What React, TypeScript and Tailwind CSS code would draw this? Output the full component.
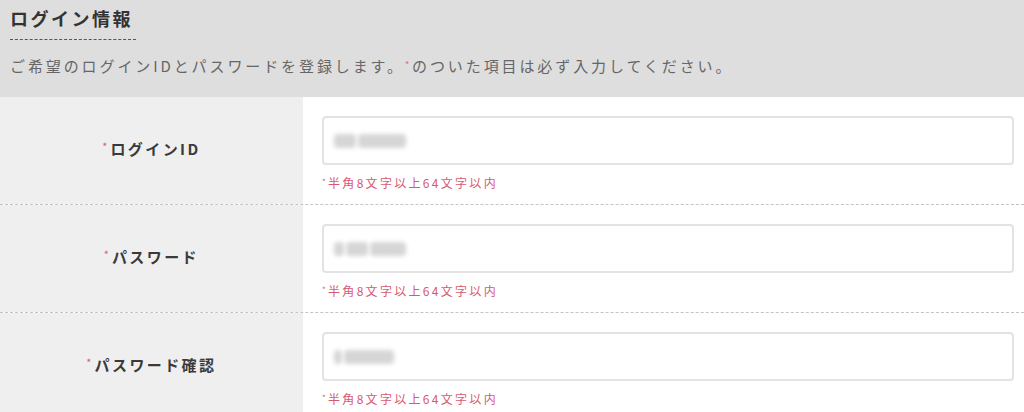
const FONT = '"Noto Sans CJK JP", "Noto Sans", sans-serif';

type Field = {
	label: string;
	blur: number[];
};

// Blurred widths of the masked values in each input, to mimic the screenshot.
const FIELDS: Field[] = [
	{label: 'ログインID', blur: [22, 48]},
	{label: 'パスワード', blur: [10, 22, 36]},
	{label: 'パスワード確認', blur: [8, 50]},
];

function Required() {
	return <span className="relative -top-[5px] mr-[1px] text-[9px] text-[#e0687c]">*</span>;
}

function Row({field}: {field: Field}) {
	return (
		<div className="flex h-[108px] border-b border-dashed border-[#c4c4c4]">
			<div className="flex w-[303px] shrink-0 items-center justify-center bg-[#efefef] pb-[3px]">
				<p className="text-[15px] font-bold tracking-[2.4px] text-[#3a3a3a]">
					<Required />
					{field.label}
				</p>
			</div>

			<div className="flex-1 bg-white pt-[19px] pl-[19px] pr-[10px]">
				<div className="flex h-[49px] items-center gap-[2px] rounded-[4px] border-2 border-[#e3e3e3] px-[10px]">
					{field.blur.map((width, i) => (
						<span
							className="h-[14px] rounded-sm bg-[#d6d6d6] blur-[2px]"
							key={i}
							style={{width}}
						/>
					))}
				</div>

				<p className="mt-[9px] text-[12px] tracking-[2.3px] text-[#d8596f]">
					<span className="relative -top-[3px] text-[8px]">*</span>
					半角8文字以上64文字以内
				</p>
			</div>
		</div>
	);
}

export default function App() {
	return (
		<div className="h-[412px] w-[1024px] overflow-hidden bg-white" style={{fontFamily: FONT}}>
			<div className="h-[97px] bg-[#dedede] px-[10px] pt-[5px]">
				<h2 className="inline-block border-b border-dashed border-[#555] pb-[7px] pr-[3px] text-[18px] font-bold tracking-[2.5px] text-[#333]">
					ログイン情報
				</h2>

				<p className="mt-[15px] text-[15px] tracking-[2.9px] text-[#666]">
					ご希望のログインIDとパスワードを登録します。
					<span className="relative -top-[4px] text-[9px] text-[#e0687c]">*</span>
					のついた項目は必ず入力してください。
				</p>
			</div>

			{FIELDS.map((field) => (
				<Row field={field} key={field.label} />
			))}
		</div>
	);
}
